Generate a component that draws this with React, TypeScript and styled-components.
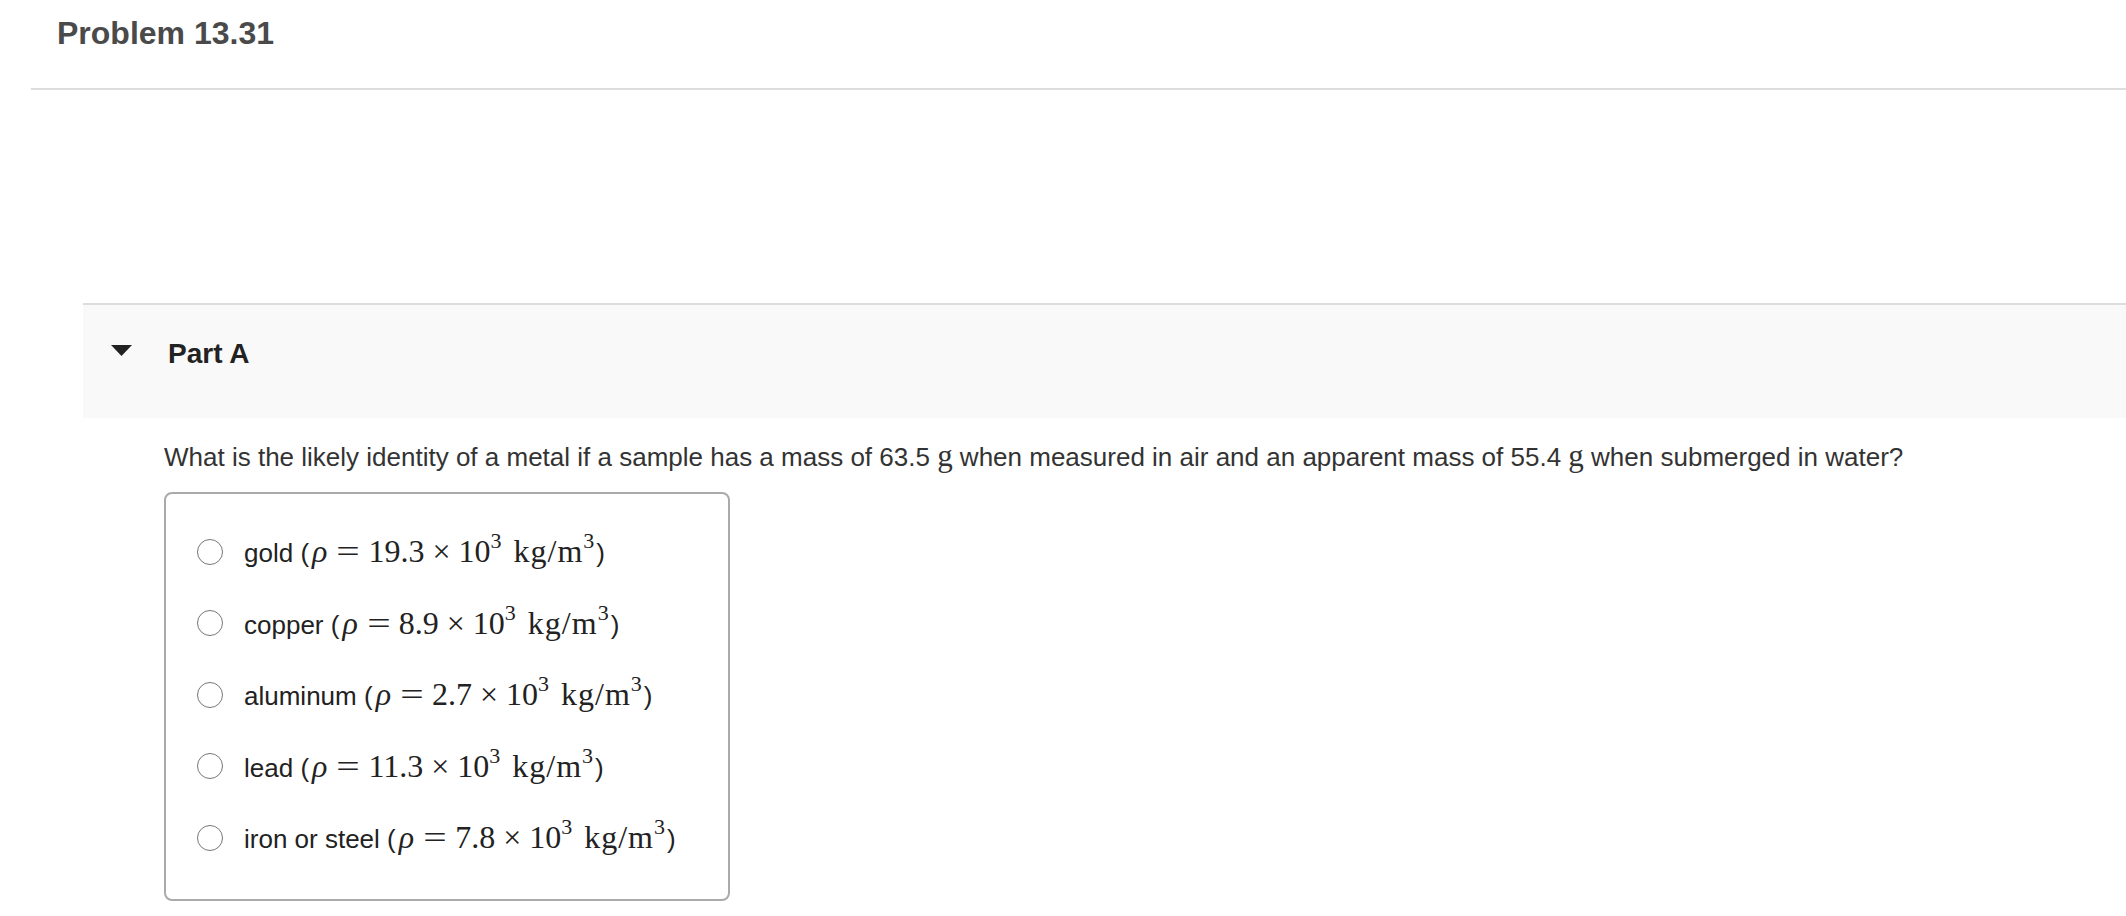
import React from "react";
import styled, { createGlobalStyle } from "styled-components";

const Global = createGlobalStyle`
  html, body { margin: 0; padding: 0; background: #ffffff; }
  body { font-family: "Liberation Sans", Arial, Helvetica, sans-serif; }
  * { box-sizing: border-box; }
`;

const Page = styled.div`
  width: 2126px;
  min-height: 916px;
  background: #ffffff;
`;

const Header = styled.header`
  margin-left: 31px;
  height: 90px;
  padding: 17px 0 0 26px;
  border-bottom: 2px solid #dddddd;
`;

const Title = styled.h1`
  margin: 0;
  font-size: 32px;
  line-height: 32px;
  font-weight: 700;
  color: #4a4a4a;
`;

const PartSection = styled.section`
  margin: 213px 0 0 83px;
`;

const PartHeader = styled.div`
  display: flex;
  align-items: center;
  gap: 36px;
  height: 115px;
  padding: 0 0 22px 28px;
  border-top: 2px solid #dddddd;
  background: #f9f9f9;
`;

const PartTitle = styled.h2`
  margin: 0;
  font-size: 28px;
  line-height: 28px;
  font-weight: 700;
  color: #222222;
  position: relative;
  top: 3px;
`;

const Body = styled.div`
  padding: 23px 0 0 81px;
`;

const Question = styled.p`
  margin: 0;
  font-size: 26px;
  line-height: 30px;
  color: #333333;
`;

const Choices = styled.div`
  margin-top: 20px;
  width: 566px;
  padding: 22px 0 25px;
  border: 2px solid #aaaaaa;
  border-radius: 8px;
  display: flex;
  flex-direction: column;
`;

const Row = styled.label`
  display: flex;
  align-items: center;
  height: 71.5px;
  padding-left: 31px;
  gap: 21px;
  font-size: 26px;
  color: #222222;
  cursor: pointer;
`;

const Radio = styled.input.attrs({ type: "radio" })`
  appearance: none;
  -webkit-appearance: none;
  margin: 0;
  width: 26px;
  height: 26px;
  flex: none;
  border: 1.5px solid #777777;
  border-radius: 50%;
  background: #ffffff;
`;

const Label = styled.span`
  white-space: nowrap;
  line-height: 30px;
`;

const M = styled.span`
  font-family: "Liberation Serif", "Times New Roman", serif;
  font-size: 32px;
  color: #222222;
`;

const MI = styled(M)`
  font-style: italic;
  padding: 0 1px 0 3px;
`;

const Op = styled(M)<{ $space: number; $stretch: number }>`
  display: inline-block;
  padding: 0 ${(p) => p.$space}px;
  transform: scaleX(${(p) => p.$stretch});
  line-height: 1;
`;

const Unit = styled(M)`
  padding-left: 10px;
  letter-spacing: 1px;
`;

const Sup = styled.sup`
  font-family: "Liberation Serif", "Times New Roman", serif;
  font-size: 22px;
  line-height: 0;
  vertical-align: 0;
  position: relative;
  top: -14px;
  padding-right: 2px;
`;

const QMath = styled.span`
  font-family: "Liberation Serif", "Times New Roman", serif;
  font-size: 31px;
`;

const Density: React.FC<{ value: string }> = ({ value }) => (
  <>
    (<MI>ρ</MI>
    <Op $space={11} $stretch={1.3}>=</Op>
    <M>{value}</M>
    <Op $space={8} $stretch={1}>×</Op>
    <M>10</M>
    <Sup>3</Sup>
    <Unit>kg/m</Unit>
    <Sup>3</Sup>)
  </>
);

const choices = [
  { name: "gold", value: "19.3" },
  { name: "copper", value: "8.9" },
  { name: "aluminum", value: "2.7" },
  { name: "lead", value: "11.3" },
  { name: "iron or steel", value: "7.8" },
];

const Caret = () => (
  <svg width="21" height="11" viewBox="0 0 21 11" aria-hidden>
    <polygon points="0,0 21,0 10.5,11" fill="#222222" />
  </svg>
);

export default function App() {
  return (
    <Page>
      <Global />
      <Header>
        <Title>Problem 13.31</Title>
      </Header>
      <PartSection>
        <PartHeader>
          <Caret />
          <PartTitle>Part A</PartTitle>
        </PartHeader>
        <Body>
          <Question>
            What is the likely identity of a metal if a sample has a mass of 63.5 <QMath>g</QMath> when
            measured in air and an apparent mass of 55.4 <QMath>g</QMath> when submerged in water?
          </Question>
          <Choices>
            {choices.map((c) => (
              <Row key={c.name}>
                <Radio name="metal" />
                <Label>
                  {c.name} <Density value={c.value} />
                </Label>
              </Row>
            ))}
          </Choices>
        </Body>
      </PartSection>
    </Page>
  );
}
